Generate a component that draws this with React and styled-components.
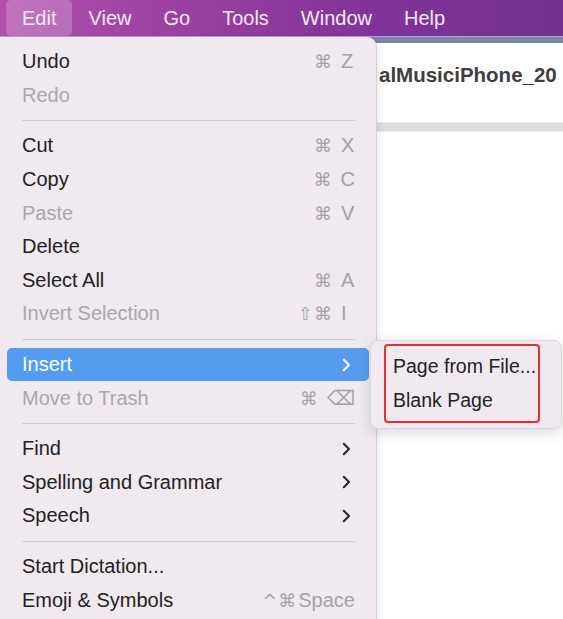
import React from "react";
import styled, { createGlobalStyle } from "styled-components";

const GlobalStyle = createGlobalStyle`
  html, body {
    margin: 0;
    padding: 0;
    overflow: hidden;
    background: #ffffff;
  }
  body {
    font-family: "Liberation Sans", Arial, "DejaVu Sans", sans-serif;
  }
`;

const menuBarItems = ["Edit", "View", "Go", "Tools", "Window", "Help"];

const editMenu = [
  { label: "Undo", mods: "⌘", key: "Z" },
  { label: "Redo", disabled: true },
  { sep: true },
  { label: "Cut", mods: "⌘", key: "X" },
  { label: "Copy", mods: "⌘", key: "C" },
  { label: "Paste", disabled: true, mods: "⌘", key: "V" },
  { label: "Delete" },
  { label: "Select All", mods: "⌘", key: "A" },
  { label: "Invert Selection", disabled: true, mods: "⇧⌘", key: "I" },
  { sep: true },
  { label: "Insert", submenu: true, active: true },
  { label: "Move to Trash", disabled: true, mods: "⌘", key: "⌫" },
  { sep: true },
  { label: "Find", submenu: true },
  { label: "Spelling and Grammar", submenu: true },
  { label: "Speech", submenu: true },
  { sep: true },
  { label: "Start Dictation..." },
  { label: "Emoji & Symbols", mods: "^⌘", key: "Space", wide: true },
];

function Chevron() {
  return (
    <svg width="9" height="14" viewBox="0 0 9 14">
      <path
        d="M1.8 1.8 L7 7 L1.8 12.2"
        fill="none"
        stroke="currentColor"
        strokeWidth="2.1"
        strokeLinecap="round"
        strokeLinejoin="round"
      />
    </svg>
  );
}

export default function App() {
  return (
    <>
      <GlobalStyle />
      <Page>
        <MenuBar>
          {menuBarItems.map((m, i) => (
            <BarItem key={m} $open={i === 0}>
              {m}
            </BarItem>
          ))}
        </MenuBar>
        <Desktop>
          <Window>
            <WindowEdge />
            <TitleRow>alMusiciPhone_20</TitleRow>
            <ToolbarBand />
          </Window>

          <Dropdown>
            {editMenu.map((item, i) =>
              item.sep ? (
                <Separator key={i} />
              ) : (
                <Row key={i} $active={item.active} $disabled={item.disabled}>
                  <span>{item.label}</span>
                  {item.submenu && (
                    <Arrow $active={item.active}>
                      <Chevron />
                    </Arrow>
                  )}
                  {item.key && (
                    <Shortcut $wide={item.wide}>
                      <Mods>{item.mods}</Mods>
                      <Key $wide={item.wide}>{item.key}</Key>
                    </Shortcut>
                  )}
                </Row>
              )
            )}
          </Dropdown>

          <Submenu>
            <Annotation>
              <SubRow>Page from File...</SubRow>
              <SubRow>Blank Page</SubRow>
            </Annotation>
          </Submenu>
        </Desktop>
      </Page>
    </>
  );
}

const Page = styled.div`
  width: 563px;
  height: 619px;
  display: flex;
  flex-direction: column;
  overflow: hidden;
`;

const MenuBar = styled.div`
  height: 36px;
  flex-shrink: 0;
  display: flex;
  align-items: stretch;
  padding-left: 6px;
  background: linear-gradient(90deg, #b251ad 0%, #983f9f 35%, #80349a 65%, #71308e 100%);
  border-bottom: 1px solid #b7a3cf;
`;

const BarItem = styled.div`
  display: flex;
  align-items: center;
  padding: 0 16px;
  font-size: 20px;
  color: #f8e9f6;
  border-radius: 5px;
  background: ${(p) => (p.$open ? "rgba(255, 255, 255, 0.2)" : "transparent")};
`;

const Desktop = styled.div`
  position: relative;
  flex: 1;
`;

const Window = styled.div`
  display: flex;
  flex-direction: column;
  height: 100%;
  background: #ffffff;
`;

const WindowEdge = styled.div`
  height: 6px;
  background: #7886a9;
`;

const TitleRow = styled.div`
  height: 79px;
  box-sizing: border-box;
  padding: 21px 0 0 379px;
  font-size: 20.5px;
  line-height: 22px;
  font-weight: 700;
  color: #3e3e3e;
  white-space: nowrap;
`;

const ToolbarBand = styled.div`
  height: 8px;
  background: #dddddd;
  border-top: 1px solid #e8e8e8;
  border-bottom: 1px solid #ececec;
`;

const Dropdown = styled.div`
  position: absolute;
  top: 0;
  left: 0;
  width: 377px;
  height: 600px;
  box-sizing: border-box;
  padding: 8px 7px 0;
  background: #f0e9ef;
  border-right: 1px solid #d6d0d6;
  border-radius: 0 10px 0 0;
  box-shadow: 2px 0 6px rgba(0, 0, 0, 0.08);
`;

const Row = styled.div`
  height: 33.6px;
  display: flex;
  align-items: center;
  padding: 0 14px 0 15px;
  border-radius: 5px;
  font-size: 20px;
  color: ${(p) => (p.$active ? "#ffffff" : p.$disabled ? "#aba7ab" : "#232223")};
  background: ${(p) => (p.$active ? "#559cf0" : "transparent")};

  > span:first-child {
    flex: 1;
    white-space: nowrap;
  }
`;

const Arrow = styled.span`
  display: flex;
  align-items: center;
  margin-right: 4px;
  color: ${(p) => (p.$active ? "#ffffff" : "#2a292a")};
`;

const Shortcut = styled.span`
  display: flex;
  align-items: center;
  gap: ${(p) => (p.$wide ? "1px" : "8px")};
  color: #a6a2a6;
  font-size: 20px;
`;

const Mods = styled.span`
  font-family: "DejaVu Sans", sans-serif;
  font-size: 18px;
  letter-spacing: 1px;
`;

const Key = styled.span`
  min-width: ${(p) => (p.$wide ? "auto" : "14px")};
  text-align: left;
`;

const Separator = styled.div`
  height: 17px;
  display: flex;
  align-items: center;
  padding: 0 14px 0 15px;

  &::after {
    content: "";
    flex: 1;
    height: 1px;
    background: #d5cfd5;
  }
`;

const Submenu = styled.div`
  position: absolute;
  top: 303px;
  left: 370px;
  width: 192px;
  box-sizing: border-box;
  padding: 3px 21px 5px 13px;
  background: #f0e9ef;
  border: 1px solid #ddd6dd;
  border-radius: 8px;
  box-shadow: 0 4px 14px rgba(0, 0, 0, 0.15);
`;

const Annotation = styled.div`
  border: 2px solid #d8363a;
  border-radius: 4px;
  padding: 3px 0 4px 7px;
`;

const SubRow = styled.div`
  height: 34px;
  display: flex;
  align-items: center;
  font-size: 19.5px;
  color: #232223;
  white-space: nowrap;
`;
